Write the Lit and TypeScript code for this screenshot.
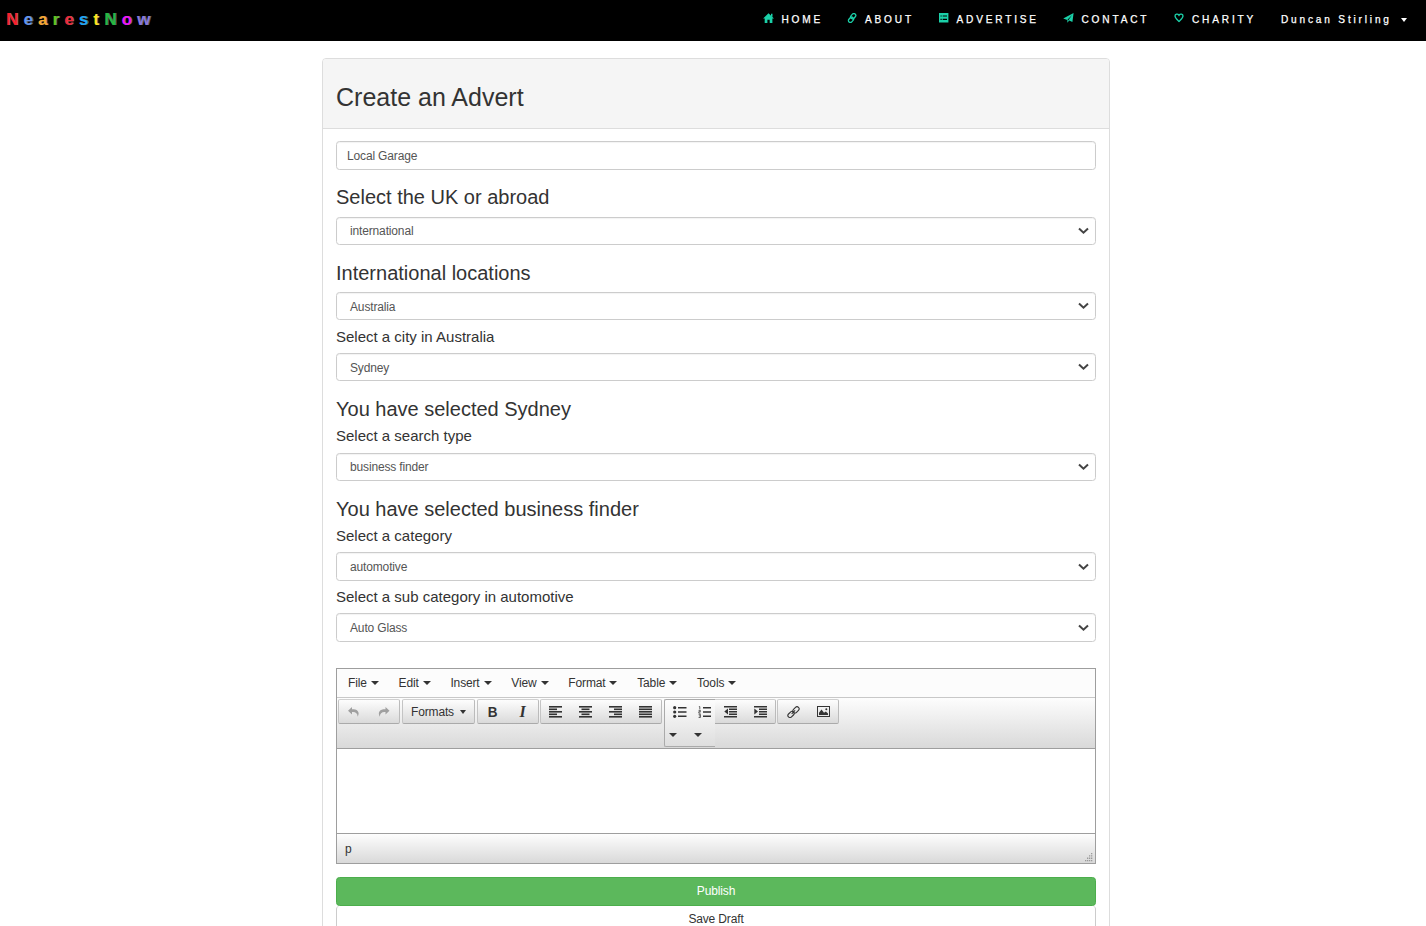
import { LitElement, html, css, svg } from "lit";
import { customElement } from "lit/decorators.js";

const brand: [string, string][] = [
  ["N", "#f8202a"], ["e", "#6495ed"], ["a", "#f9a52b"], ["r", "#62c41c"], ["e", "#ec2836"],
  ["s", "#1ea6f8"], ["t", "#ffe419"], ["N", "#28b840"], ["o", "#ee12fa"], ["w", "#8878dc"],
];

const lines = (rows: [number, number][]) =>
  rows.map(([x, w], i) => svg`<rect x=${x} y=${i * 2.5} width=${w} height="1.6"/>`);

const glyphs: Record<string, unknown> = {
  home: svg`<path d="M5.5 0.3 11 5.6H9.4V10H6.7V6.8H4.4V10H1.7V5.6H0.1z"/><path d="M8 .8h1.5v3H8z"/>`,
  link: svg`<g fill="none" stroke="currentColor" stroke-width="1.3"><rect x="4.3" y=".3" width="3.8" height="5.8" rx="1.9" transform="rotate(42 6.2 3.2)"/><rect x="2.1" y="3.9" width="3.8" height="5.8" rx="1.9" transform="rotate(42 4 6.8)"/></g>`,
  list: svg`<path fill-rule="evenodd" d="M0 0h9.4v9.4H0zM1.5 2.4v1.2h1.2V2.4zm2.2 0v1.2H8V2.4zM1.5 5.8V7h1.2V5.8zm2.2 0V7H8V5.8z"/>`,
  plane: svg`<path d="M10.6 0 9.4 9 6.2 7.6 4.4 9.8 4.3 6.9.2 5.6z"/><path d="M4.5 6.7 9 2.1 5.2 7.4z" fill="#000"/>`,
  heart: svg`<path d="M5 8.4C2.7 6.3 1 5 1 3.1 1 1 3.7.4 5 2.3 6.3.4 9 1 9 3.1 9 5 7.3 6.3 5 8.4z" fill="none" stroke="currentColor" stroke-width="1.3"/>`,
  undo: svg`<path d="M5 1 1 4.7 5 8.4V6.1C8.5 5.7 10.4 7.2 10.7 10.7 13.2 5.8 10.3 3.1 5 3.3z"/>`,
  redo: svg`<path d="M8.5 1l4 3.7-4 3.7V6.1C5 5.7 3.1 7.2 2.8 10.7.3 5.8 3.2 3.1 8.5 3.3z"/>`,
  left: svg`${lines([[0, 13], [0, 8], [0, 13], [0, 8], [0, 13]])}`,
  center: svg`${lines([[0, 13], [2.5, 8], [0, 13], [2.5, 8], [0, 13]])}`,
  right: svg`${lines([[0, 13], [5, 8], [0, 13], [5, 8], [0, 13]])}`,
  justify: svg`${lines([[0, 13], [0, 13], [0, 13], [0, 13], [0, 13]])}`,
  bullets: svg`<circle cx="1.7" cy="1.7" r="1.6"/><circle cx="1.7" cy="6" r="1.6"/><circle cx="1.7" cy="10.3" r="1.6"/><path d="M5 1h8.5v1.5H5zM5 5.2h8.5v1.5H5zM5 9.5h8.5V11H5z"/>`,
  numbers: svg`<path d="M5 1h8v1.5H5zM5 5.2h8v1.5H5zM5 9.5h8V11H5z"/><path d="M.9.6h.9v2.8M.6 4.4h1.8v1.3H.8v1.4h1.8M.6 8.3h1.8v3.2H.6M.9 9.9h1.5" fill="none" stroke="currentColor" stroke-width=".75"/>`,
  outdent: svg`<path d="M0 0h13v1.6H0zM5 2.5h8v1.6H5zM5 5h8v1.6H5zM5 7.5h8v1.6H5zM0 10h13v1.6H0zM4 2.6v6L.3 5.6z"/>`,
  indent: svg`<path d="M0 0h13v1.6H0zM5 2.5h8v1.6H5zM5 5h8v1.6H5zM5 7.5h8v1.6H5zM0 10h13v1.6H0zM.3 2.6v6L4 5.6z"/>`,
  chain: svg`<g fill="none" stroke="currentColor" stroke-width="1.1"><rect x="6.9" y=".3" width="4.2" height="7" rx="2.1" transform="rotate(45 9 3.8)"/><rect x="1.9" y="5" width="4.2" height="7" rx="2.1" transform="rotate(45 4 8.5)"/><path d="M4.7 7.8 8.1 4.4"/></g>`,
  image: svg`<rect x=".5" y=".5" width="12" height="10" fill="none" stroke="currentColor"/><path d="M2 9V6.8L4.5 3.6 7 6.8 8.8 5.4 11 7.4V9z"/><circle cx="9.3" cy="3.3" r="1"/>`,
};

const icon = (name: string, w = 13, h = 12) =>
  html`<svg class="icon" width=${w} height=${h} viewBox="0 0 ${w} ${h}" fill="currentColor">${glyphs[name]}</svg>`;

@customElement("app-root")
export class AppRoot extends LitElement {
  static styles = css`
    :host { display: block; height: 926px; overflow: hidden; background: #fff; color: #333;
      font-family: "Liberation Sans", Arial, sans-serif; font-size: 12px; letter-spacing: -0.15px; }
    * { box-sizing: border-box; }
    .icon { display: block; flex: none; }
    .nav { height: 41px; background: #000; display: flex; justify-content: space-between; align-items: flex-start; padding: 0 19px 0 6px; }
    .brand { font-weight: bold; font-size: 17px; line-height: 20px; letter-spacing: 5.1px; padding-top: 10px; text-shadow: 1px 0 0 rgba(255,255,255,.4); }
    .links { display: flex; color: #fff; font-size: 10.1px; letter-spacing: 2.82px; line-height: 12px; padding-top: 14px; -webkit-text-stroke: .25px #fff; }
    .item { display: flex; white-space: pre; }
    .item .icon { color: #1bd0a8; margin-top: -1px; }
    .user { width: 126px; justify-content: space-between; align-items: center; }
    .user .caret { margin-bottom: 1px; }
    .caret { width: 0; height: 0; flex: none; border: 3.5px solid transparent; border-top: 4px solid currentColor; border-bottom: 0; }
    .panel { width: 788px; margin: 17px 0 0 322px; border: 1px solid #ddd; border-radius: 4px 4px 0 0; height: 900px; }
    .head { height: 70px; background: #f5f5f5; border-bottom: 1px solid #ddd; padding: 23px 13px 0; border-radius: 3px 3px 0 0; }
    .title { margin: 0; font-size: 25px; line-height: 30px; font-weight: 400; letter-spacing: 0; }
    .body { padding: 12px 13px 0; }
    .field { height: 28px; border: 1px solid #ccc; border-radius: 3.5px; padding: 0 6px 0 13px; display: flex; align-items: center; justify-content: space-between; color: #555; box-shadow: inset 0 1px 1px rgba(0,0,0,.05); }
    .field.text { height: 29px; padding-left: 10px; }
    .field.tall { height: 29px; }
    .field.low span { padding-top: 2px; }
    .h3 { margin: 0; font-size: 20px; font-weight: 400; letter-spacing: 0; line-height: 24px; height: 47px; padding-top: 15px; }
    .h3.down { padding-top: 16px; }
    .h3.short { height: 39px; padding-top: 16px; }
    .h4 { margin: 0; font-size: 15px; font-weight: 400; letter-spacing: 0; line-height: 18px; height: 33px; padding-top: 7px; }
    .h4.down { padding-top: 8px; }
    .h4.cat, .h4.sub { height: 32px; }
    .editor { margin-top: 26px; height: 196px; border: 1px solid #9e9e9e; }
    .menus { height: 29px; background: #fcfcfc; border-bottom: 1px solid #c8c8c8; display: flex; align-items: center; padding: 0 0 1px 11px; gap: 19.8px; }
    .menu { display: flex; align-items: center; gap: 5px; }
    .menu .caret { border-left-width: 4px; border-right-width: 4px; margin-left: -1px; }
    .bar { height: 51px; border-bottom: 1px solid #9e9e9e; background: linear-gradient(#fdfdfd, #d9d9d9); padding: 1px 0 0 1px; display: flex; gap: 2px; align-items: flex-start; }
    .group { display: flex; height: 25px; border: 1px solid; border-color: #d0d0d0 #bbb #aaa #c4c4c4; border-radius: 2px; background: linear-gradient(#fdfdfd, #dadada); align-items: center; }
    .near { margin-left: -1px; }
    .btn { width: 30px; display: flex; justify-content: center; }
    .dim { color: #a0a0a0; }
    .dim .btn, .align .btn { padding-right: 1px; }
    .formats { justify-content: space-between; padding: 0 8px 0 8px; width: 73px; white-space: nowrap; }
    .bold { font: bold 15px/20px "Liberation Sans", sans-serif; transform: scaleX(.9); padding-right: 1px; }
    .italic { font: italic bold 16px/20px "Liberation Serif", serif; padding-right: 1px; }
    .split { display: flex; align-items: flex-start; }
    .stack { height: 48px; width: 51px; border: 1px solid #aaa; border-right: 0; border-radius: 2px 0 0 2px; background: linear-gradient(#fdfdfd, #dedede); display: flex; }
    .col { width: 25px; padding: 6px 0 0 8px; }
    .col .caret { margin: 15px 0 0 -4px; border-left-width: 4px; border-right-width: 4px; }
    .rest { border-left: 0; border-radius: 0 2px 2px 0; width: 61px; }
    .canvas { height: 84px; }
    .status { height: 30px; border-top: 1px solid #9e9e9e; background: linear-gradient(#fdfdfd, #d9d9d9); display: flex; align-items: flex-end; justify-content: space-between; padding: 0 1px 1px 8px; }
    .path { line-height: 26px; }
    .publish { margin-top: 13px; height: 29px; background: #5cb85c; border: 1px solid #4cae4c; border-radius: 3.5px; color: #fff; text-align: center; line-height: 26px; }
    .draft { height: 29px; border: 1px solid #ccc; border-top: 0; border-radius: 3.5px; text-align: center; line-height: 26px; }
  `;

  link(name: string, label: string, width: number, gap: number, w = 11) {
    return html`<a class="item" style="width:${width}px;gap:${gap}px">${icon(name, w, 10)}<span>${label}</span></a>`;
  }

  select(label: string, extra = "") {
    return html`<div class="field ${extra}"><span>${label}</span>
      <svg class="icon" width="11" height="8" viewBox="0 0 11 8" fill="none" stroke="#444" stroke-width="2"><path d="M1 1.5 5.5 5.7 10 1.5"/></svg></div>`;
  }

  render() {
    return html`
      <nav class="nav">
        <div class="brand">${brand.map(([c, color]) => html`<span style="color:${color}">${c}</span>`)}</div>
        <div class="links">
          ${this.link("home", "HOME", 84, 7.5)}
          ${this.link("link", "ABOUT", 92, 7)}
          ${this.link("list", "ADVERTISE", 124, 7.5, 10)}
          ${this.link("plane", "CONTACT", 111, 7.5)}
          ${this.link("heart", "CHARITY", 107, 8, 10)}
          <a class="item user"><span>Duncan Stirling</span><span class="caret"></span></a>
        </div>
      </nav>
      <main class="panel">
        <header class="head"><h2 class="title">Create an Advert</h2></header>
        <div class="body">
          <div class="field text">Local Garage</div>
          <h3 class="h3">Select the UK or abroad</h3>
          ${this.select("international")}
          <h3 class="h3 down">International locations</h3>
          ${this.select("Australia", "low")}
          <h4 class="h4 down">Select a city in Australia</h4>
          ${this.select("Sydney", "low")}
          <h3 class="h3 short">You have selected Sydney</h3>
          <h4 class="h4">Select a search type</h4>
          ${this.select("business finder")}
          <h3 class="h3 short">You have selected business finder</h3>
          <h4 class="h4 cat">Select a category</h4>
          ${this.select("automotive", "tall")}
          <h4 class="h4 sub">Select a sub category in automotive</h4>
          ${this.select("Auto Glass", "tall")}
          <section class="editor">
            <div class="menus">
              ${["File", "Edit", "Insert", "View", "Format", "Table", "Tools"].map(
                (m) => html`<span class="menu">${m}<span class="caret"></span></span>`)}
            </div>
            <div class="bar">
              <div class="group dim"><span class="btn">${icon("undo")}</span><span class="btn">${icon("redo")}</span></div>
              <div class="group formats">Formats<span class="caret"></span></div>
              <div class="group"><span class="btn bold">B</span><span class="btn italic">I</span></div>
              <div class="group near align">${["left", "center", "right", "justify"].map((n) => html`<span class="btn">${icon(n)}</span>`)}</div>
              <div class="split">
                <div class="stack">
                  <div class="col">${icon("bullets", 14, 12)}<div class="caret"></div></div>
                  <div class="col">${icon("numbers", 14, 12)}<div class="caret"></div></div>
                </div>
                <div class="group rest"><span class="btn">${icon("outdent")}</span><span class="btn">${icon("indent")}</span></div>
              </div>
              <div class="group near"><span class="btn">${icon("chain")}</span><span class="btn">${icon("image")}</span></div>
            </div>
            <div class="canvas"></div>
            <div class="status"><span class="path">p</span>
              <svg class="icon" width="10" height="9" viewBox="0 0 10 9" fill="#999"><path d="M7 0h1.3v1.3H7zM5 2.3h1.3v1.3H5zM7 2.3h1.3v1.3H7zM3 4.6h1.3v1.3H3zM5 4.6h1.3v1.3H5zM7 4.6h1.3v1.3H7zM1 6.9h1.3v1.3H1zM3 6.9h1.3v1.3H3zM5 6.9h1.3v1.3H5zM7 6.9h1.3v1.3H7z"/></svg>
            </div>
          </section>
          <div class="publish">Publish</div>
          <div class="draft">Save Draft</div>
        </div>
      </main>`;
  }
}
